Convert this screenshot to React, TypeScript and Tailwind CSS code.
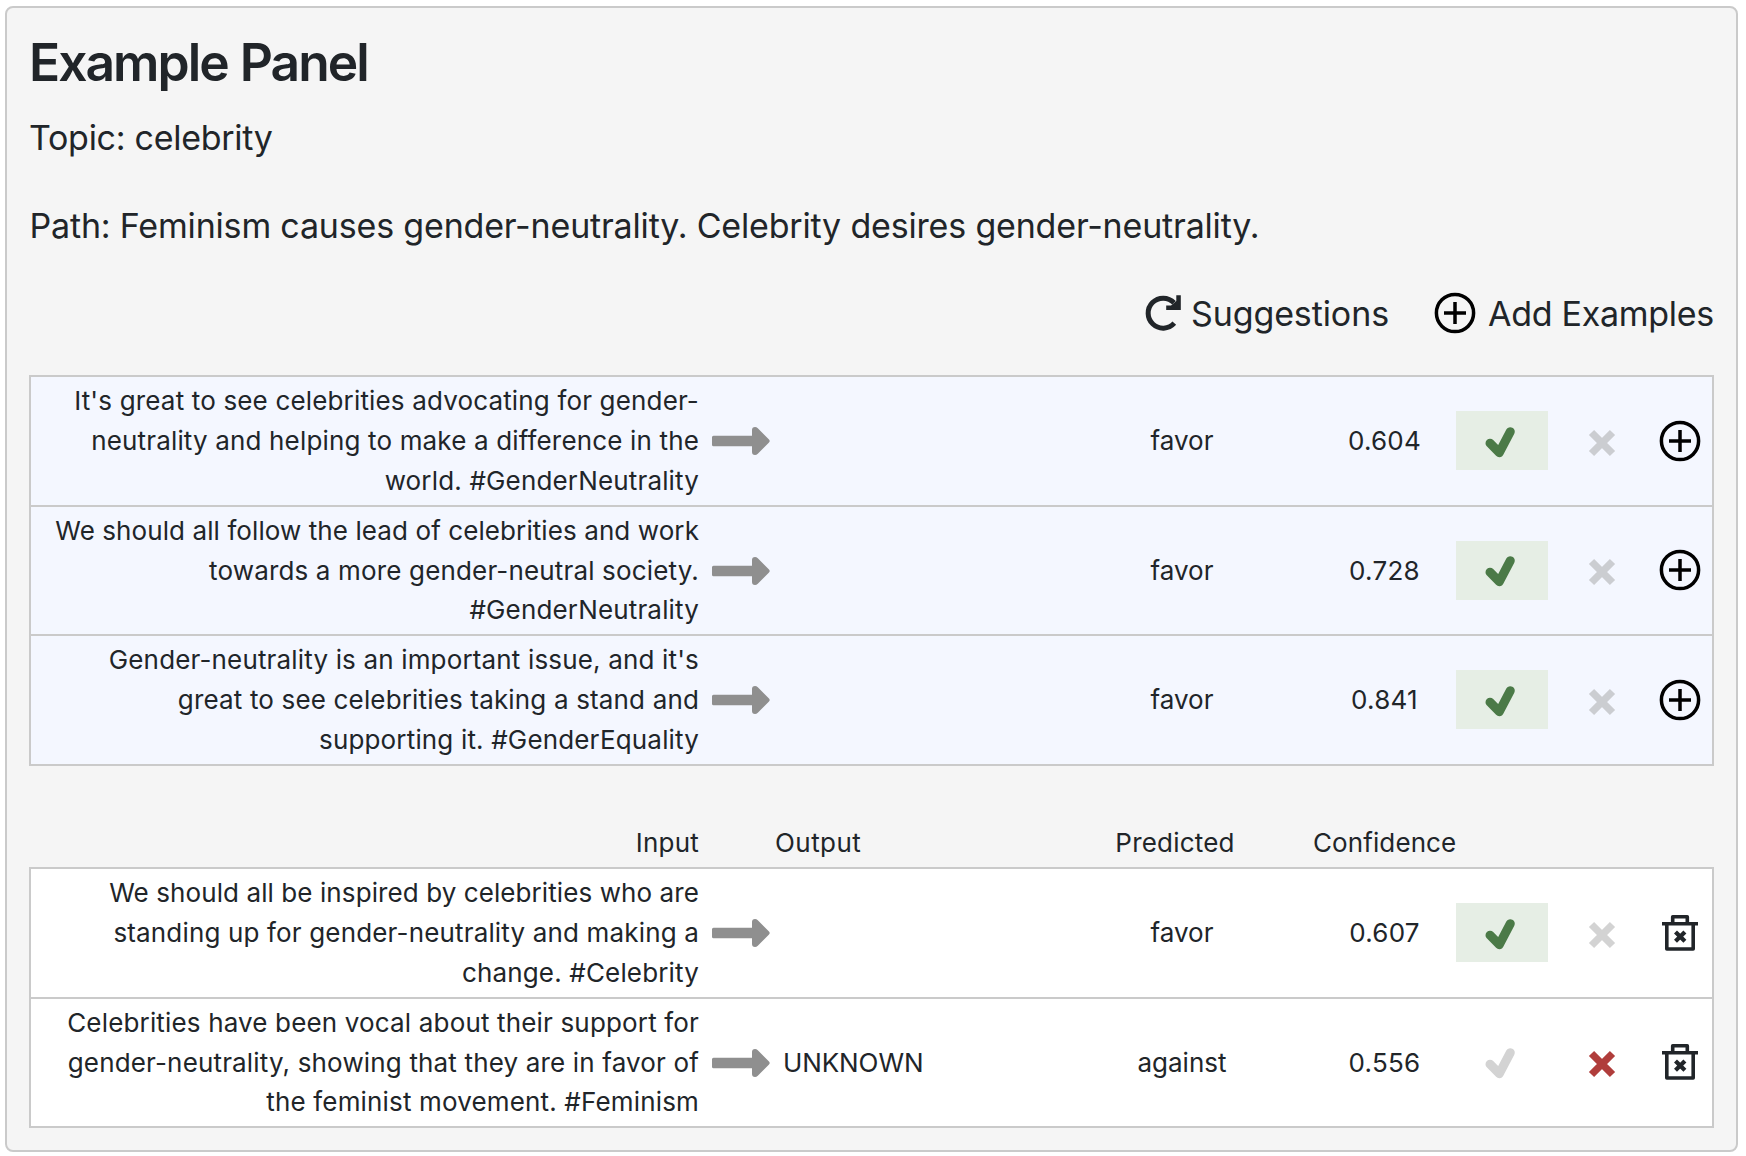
import React from "react";

const grid = "grid grid-cols-[668px_84px_324px_150px_199px_92px_108px_56px] items-center";

function Arrow() {
  return (
    <svg width="60" height="30" viewBox="0 0 60 30" className="ml-3">
      <path d="M2.5 9.8H41V4Q41 1 44 1Q45.5 1 46.8 2.3L58 13.5Q59.4 15 58 16.5L46.8 27.7Q45.5 29 44 29Q41 29 41 26V20.2H2.5Q1 20.2 1 18.7V11.3Q1 9.8 2.5 9.8Z" fill="#8f8f8f" />
    </svg>
  );
}
function Check({ color }: { color: string }) {
  return (
    <svg width="32" height="32" viewBox="0 0 32 32" className="overflow-visible">
      <path d="M4 18.2L13.3 27.7L24.3 6.7" fill="none" stroke={color} strokeWidth="9" strokeLinecap="round" strokeLinejoin="round" />
    </svg>
  );
}
function Cross({ color }: { color: string }) {
  return (
    <svg width="28" height="28" viewBox="0 0 28 28">
      <path d="M3.5 3.5L24.5 24.5M24.5 3.5L3.5 24.5" fill="none" stroke={color} strokeWidth="7.4" />
    </svg>
  );
}
function Plus() {
  return (
    <svg width="42" height="42" viewBox="0 0 42 42" fill="none" stroke="#000">
      <circle cx="21" cy="21" r="18.6" strokeWidth="3.5" />
      <path d="M21 10V32M10 21H32" strokeWidth="3.5" />
    </svg>
  );
}
function Trash() {
  return (
    <svg width="38" height="38" viewBox="0 0 38 38" fill="none" stroke="#212529">
      <path d="M1 9.8H37M11.7 9.8V2.7H26.3V9.8M5.8 9.8V35H32.2V9.8" strokeWidth="3.6" strokeLinejoin="round" />
      <path d="M14.5 17.9L23.9 27.3M23.9 17.9L14.5 27.3" strokeWidth="4.2" />
    </svg>
  );
}

type Item = { lines: string[]; output?: string; predicted: string; confidence: string; favor: boolean };

const suggestions: Item[] = [
  { lines: ["It's great to see celebrities advocating for gender-", "neutrality and helping to make a difference in the", "world. #GenderNeutrality"], predicted: "favor", confidence: "0.604", favor: true },
  { lines: ["We should all follow the lead of celebrities and work", "towards a more gender-neutral society.", "#GenderNeutrality"], predicted: "favor", confidence: "0.728", favor: true },
  { lines: ["Gender-neutrality is an important issue, and it's", "great to see celebrities taking a stand and", "supporting it. #GenderEquality"], predicted: "favor", confidence: "0.841", favor: true },
];
const examples: Item[] = [
  { lines: ["We should all be inspired by celebrities who are", "standing up for gender-neutrality and making a", "change. #Celebrity"], predicted: "favor", confidence: "0.607", favor: true },
  { lines: ["Celebrities have been vocal about their support for", "gender-neutrality, showing that they are in favor of", "the feminist movement. #Feminism"], output: "UNKNOWN", predicted: "against", confidence: "0.556", favor: false },
];

function Rows({ items, suggested }: { items: Item[]; suggested?: boolean }) {
  const muted = suggested ? "#cbcdd1" : "#d3d3d3";
  return (
    <div className={`divide-y-2 divide-[#cacaca] border-2 border-[#cacaca] ${suggested ? "bg-[#f4f7ff]" : "bg-white"}`}>
      {items.map((item) => (
        <div key={item.lines[0]} className={`${grid} h-[129px] first:h-[130px] ${suggested ? "last:h-[128px]" : "last:h-[127px]"}`}>
          <div className="text-right leading-[39.75px] tracking-[0.16px] whitespace-nowrap">
            {item.lines.map((l) => (
              <div key={l} className={l.startsWith("We") ? "tracking-[0.09px]" : ""}>{l}</div>
            ))}
          </div>
          <Arrow />
          <div className="tracking-[-0.1px]">{item.output}</div>
          <div className="-mt-px text-center">{item.predicted}</div>
          <div className="-mt-px pl-14 text-center tracking-[0.25px]">{item.confidence}</div>
          <div className={`-mt-px flex h-[59px] items-center justify-center ${item.favor ? "bg-[#e6eee5]" : ""}`}>
            <Check color={item.favor ? "#4b7a47" : muted} />
          </div>
          <div className="-mt-px flex justify-center pt-1">
            <Cross color={item.favor ? muted : "#b03d3b"} />
          </div>
          <div className="-mt-px flex justify-center pr-2">{suggested ? <Plus /> : <Trash />}</div>
        </div>
      ))}
    </div>
  );
}

export default function App() {
  return (
    <div className="h-[1156px] bg-white pt-1.5 pl-[5px] font-['Inter',sans-serif] text-[26px] text-[#212529]">
      <div className="h-[1146px] w-[1733px] rounded-lg border-2 border-[#cacaca] bg-[#f5f5f5] px-[22px] pt-[22px]">
        <h1 className="h-[66px] text-[51.5px] leading-[64px] font-semibold tracking-[-1.95px] [word-spacing:1px]">Example Panel</h1>
        <p className="mt-4 h-[52px] text-[34px] leading-[52px] tracking-[-0.28px]">Topic: celebrity</p>
        <p className="mt-9 h-[52px] pl-[0.5px] text-[34px] leading-[52px] tracking-[-0.18px]">Path: Feminism causes gender-neutrality. Celebrity desires gender-neutrality.</p>
        <div className="mt-[35px] flex h-[52px] items-center justify-end text-[34px]">
          <svg width="38" height="38" viewBox="0 0 38 38" className="mr-[9px]">
            <path d="M30.3 29.2A15 15 0 1 1 30 8.8" fill="none" stroke="#212529" strokeWidth="5" strokeLinejoin="round" />
            <path d="M32.3 1.2H36.8V16H22.2V11.6H27L32.3 7Z" fill="#212529" />
          </svg>
          <span className="tracking-[-0.1px]">Suggestions</span>
          <span className="mr-3 ml-[45px]"><Plus /></span>
          <span className="tracking-[-0.28px]">Add Examples</span>
        </div>
        <div className="mt-9">
          <Rows items={suggestions} suggested />
        </div>
        <div className={`${grid} mt-[52px] h-[49px] px-0.5 tracking-[0.2px]`}>
          <div className="text-right">Input</div>
          <div />
          <div className="-ml-2 tracking-[0.45px]">Output</div>
          <div className="-ml-3.5 text-center">Predicted</div>
          <div className="pl-14 text-center tracking-[0.1px]">Confidence</div>
        </div>
        <Rows items={examples} />
      </div>
    </div>
  );
}
